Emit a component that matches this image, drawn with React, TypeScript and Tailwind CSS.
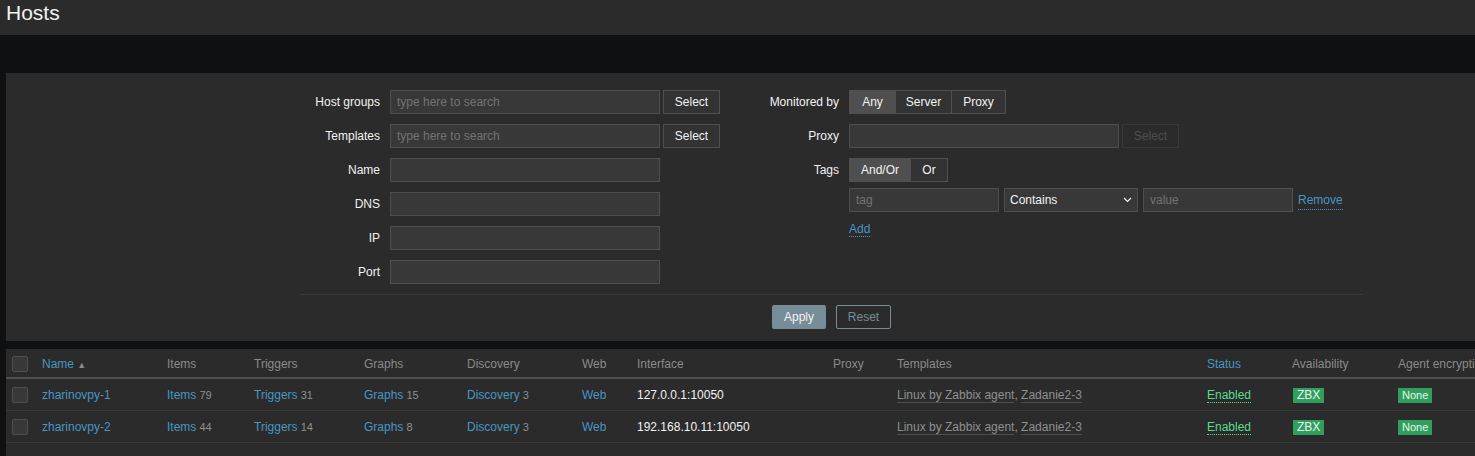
import React from "react";

const font = { fontFamily: '"Liberation Sans", Arial, sans-serif' };

function Label({ children, w }: { children: React.ReactNode; w: string }) {
  return <div className={`${w} shrink-0 pr-[10px] text-right text-[#f2f2f2]`}>{children}</div>;
}

function Input({ w, placeholder }: { w: string; placeholder?: string }) {
  return (
    <div className={`${w} h-6 shrink-0 border border-[#4f4f4f] bg-[#383838] px-[6px] leading-[22px] text-[#737373]`}>
      {placeholder}
    </div>
  );
}

function Btn({ children, disabled }: { children: React.ReactNode; disabled?: boolean }) {
  return (
    <div
      className={`ml-[3px] flex h-6 w-[57px] items-center justify-center border ${
        disabled ? "border-[#383838] text-[#4f4f4f]" : "border-[#4f4f4f] bg-[#333333] text-[#f2f2f2]"
      }`}
    >
      {children}
    </div>
  );
}

function Seg({ items, active, widths }: { items: string[]; active: number; widths: string[] }) {
  return (
    <div className="flex h-6 border border-[#4f4f4f]">
      {items.map((it, i) => (
        <div
          key={it}
          className={`${widths[i]} flex items-center justify-center text-[#f2f2f2] ${
            i === active ? "bg-[#4f4f4f]" : "bg-[#333333]"
          } ${i > 0 ? "border-l border-[#4f4f4f]" : ""}`}
        >
          {it}
        </div>
      ))}
    </div>
  );
}

const cols = "grid grid-cols-[36px_125px_87px_110px_103px_115px_55px_196px_64px_310px_85px_106px_1fr]";

function Check() {
  return <div className="ml-[6px] h-4 w-4 rounded-[2px] border border-[#4f4f4f] bg-[#383838]" />;
}

function Link({ text, n }: { text: string; n?: string }) {
  return (
    <span>
      <span className="text-[#4796c4]">{text}</span>
      {n && <span className="text-[11px] text-[#8f8f8f]"> {n}</span>}
    </span>
  );
}

function Row({ name, items, triggers, graphs, iface }: { name: string; items: string; triggers: string; graphs: string; iface: string }) {
  return (
    <div className={`${cols} h-[32px] items-center border-b border-[#383838]`}>
      <Check />
      <span className="text-[#4796c4]">{name}</span>
      <Link text="Items" n={items} />
      <Link text="Triggers" n={triggers} />
      <Link text="Graphs" n={graphs} />
      <Link text="Discovery" n="3" />
      <Link text="Web" />
      <span className="text-[#f2f2f2]">{iface}</span>
      <span />
      <span className="text-[#8f8f8f]">
        <span className="border-b border-[#4f4f4f]">Linux by Zabbix agent</span>,{" "}
        <span className="border-b border-[#4f4f4f]">Zadanie2-3</span>
      </span>
      <span>
        <span className="border-b border-dotted border-[#59db8f] text-[#59db8f]">Enabled</span>
      </span>
      <span>
        <span className="ml-px inline-block bg-[#2f9f5e] px-[4px] text-[12px] leading-[15px] text-[#e8f5ec]">ZBX</span>
      </span>
      <span>
        <span className="inline-block bg-[#2f9f5e] px-[4px] text-[11px] leading-[15px] text-[#e8f5ec]">None</span>
      </span>
    </div>
  );
}

export default function App() {
  return (
    <div className="h-[456px] overflow-hidden bg-[#0e1012] text-[12px]" style={font}>
      <div className="h-[35px] bg-[#2b2b2b] pl-[6px] text-[21px] leading-[26px] text-[#f2f2f2]">Hosts</div>
      <div className="h-[38px]" />

      <div className="ml-[6px] bg-[#2b2b2b] pb-[12px] pt-[17px]">
        <div className="flex pl-[294px]">
          <div className="flex flex-col gap-[10px]">
            {[
              ["Host groups", true],
              ["Templates", true],
              ["Name", false],
              ["DNS", false],
              ["IP", false],
              ["Port", false],
            ].map(([l, s]) => (
              <div key={l as string} className="flex items-center">
                <Label w="w-[90px]">{l}</Label>
                <Input w="w-[270px]" placeholder={s ? "type here to search" : undefined} />
                {s && <Btn>Select</Btn>}
              </div>
            ))}
          </div>

          <div className="ml-[29px] flex flex-col">
            <div className="flex items-center">
              <Label w="w-[100px]">Monitored by</Label>
              <Seg items={["Any", "Server", "Proxy"]} active={0} widths={["w-[45px]", "w-[56px]", "w-[54px]"]} />
            </div>
            <div className="mt-[10px] flex items-center">
              <Label w="w-[100px]">Proxy</Label>
              <Input w="w-[270px]" />
              <Btn disabled>Select</Btn>
            </div>
            <div className="mt-[10px] flex items-center">
              <Label w="w-[100px]">Tags</Label>
              <Seg items={["And/Or", "Or"]} active={0} widths={["w-[60px]", "w-[37px]"]} />
            </div>
            <div className="ml-[100px] mt-[6px] flex items-center gap-[5px]">
              <Input w="w-[150px]" placeholder="tag" />
              <div className="flex h-6 w-[134px] items-center justify-between border border-[#4f4f4f] bg-[#383838] px-[5px] text-[#f2f2f2]">
                Contains
                <svg width="9" height="6" viewBox="0 0 9 6" fill="none" stroke="#f2f2f2" strokeWidth="1.2">
                  <path d="M1 1l3.5 3.5L8 1" />
                </svg>
              </div>
              <Input w="w-[150px]" placeholder="value" />
              <span className="border-b border-dotted border-[#4796c4] text-[#4796c4]">Remove</span>
            </div>
            <div className="ml-[100px] mt-[8px]">
              <span className="border-b border-dotted border-[#4796c4] text-[#4796c4]">Add</span>
            </div>
          </div>
        </div>

        <div className="ml-[294px] mt-[10px] w-[1063px] border-t border-[#383838]" />
        <div className="ml-[294px] mt-[10px] flex w-[1063px] justify-center gap-[10px]">
          <div className="flex h-6 w-[54px] items-center justify-center rounded-[2px] bg-[#768d99] text-[#f2f2f2]">Apply</div>
          <div className="flex h-6 w-[55px] items-center justify-center rounded-[2px] border border-[#768d99] text-[#768d99]">Reset</div>
        </div>
      </div>

      <div className="ml-[6px] mt-[8px] h-[200px] bg-[#2b2b2b]">
        <div className={`${cols} h-[30px] items-center border-b-2 border-[#4f4f4f] pt-[2px] text-[#8a8a8a]`}>
          <Check />
          <span className="text-[#4796c4]">
            Name <span className="text-[9px] text-[#8a8a8a]">▲</span>
          </span>
          <span>Items</span>
          <span>Triggers</span>
          <span>Graphs</span>
          <span>Discovery</span>
          <span>Web</span>
          <span>Interface</span>
          <span>Proxy</span>
          <span>Templates</span>
          <span className="text-[#4796c4]">Status</span>
          <span>Availability</span>
          <span className="whitespace-nowrap">Agent encryption</span>
        </div>
        <Row name="zharinovpy-1" items="79" triggers="31" graphs="15" iface="127.0.0.1:10050" />
        <Row name="zharinovpy-2" items="44" triggers="14" graphs="8" iface="192.168.10.11:10050" />
      </div>
    </div>
  );
}
